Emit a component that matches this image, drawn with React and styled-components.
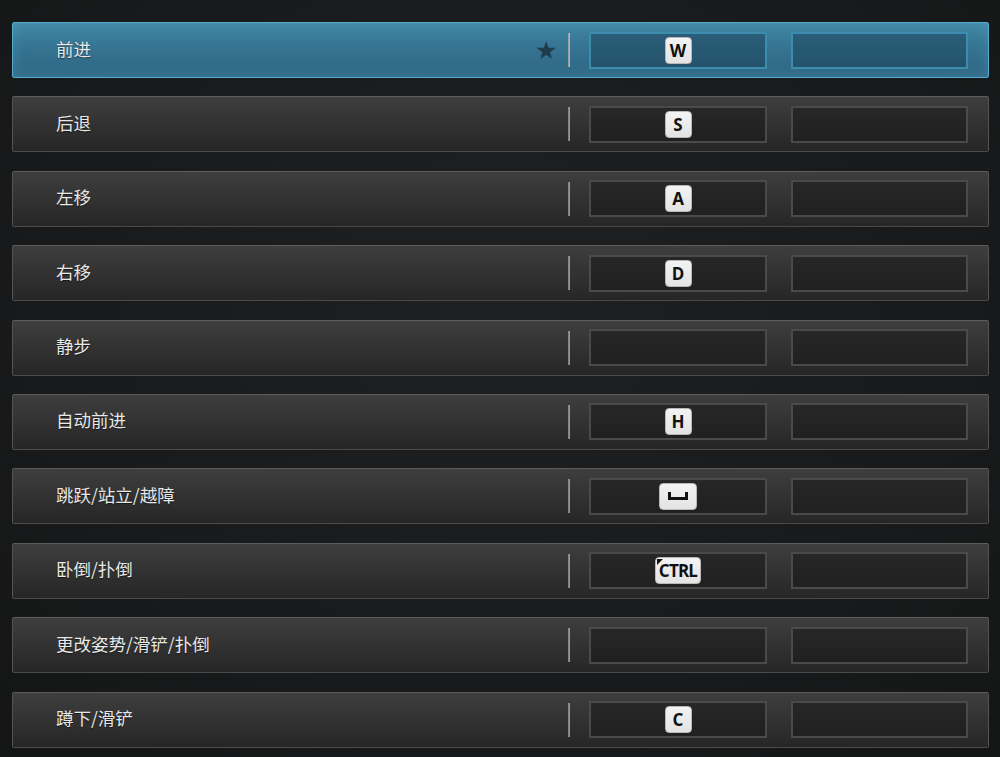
import React from "react";
import styled, { createGlobalStyle, css } from "styled-components";

const Global = createGlobalStyle`
  html, body { margin: 0; padding: 0; }
  body {
    background: #1a1b1c;
    font-family: "Noto Sans CJK SC", "Noto Sans", sans-serif;
  }
`;

const Page = styled.div`
  width: 1000px;
  height: 757px;
  box-sizing: border-box;
  padding: 22px 11px 0 12px;
  overflow: hidden;
  background:
    radial-gradient(ellipse at 50% 40%, #1f2021 0%, #18191a 70%, #141515 100%);
  display: flex;
  flex-direction: column;
  gap: 18.4px;
`;

const Row = styled.div`
  height: 56px;
  flex-shrink: 0;
  box-sizing: border-box;
  display: grid;
  grid-template-columns: 1fr 34px 2px 221px 177px;
  align-items: center;
  padding: 0 20px 0 43px;
  border-radius: 2px;
  ${(p) =>
    p.$active
      ? css`
          border: 1px solid #56aacb;
          background: linear-gradient(180deg, #3f86a3 0%, #357492 45%, #2e6683 100%);
          box-shadow: inset 0 0 14px rgba(110, 190, 220, 0.25);
        `
      : css`
          border: 1px solid #545454;
          border-top-color: #5c5c5c;
          border-bottom-color: #4a4a4a;
          background: linear-gradient(180deg, #3e3e3e 0%, #323232 50%, #262626 100%);
        `}
`;

const Label = styled.span`
  font-family: "Noto Sans CJK SC", "Noto Sans", sans-serif;
  font-size: 17.5px;
  color: #e8e8e8;
  text-shadow: 0 1px 1px rgba(0, 0, 0, 0.5);
  margin-top: -4px;
`;

const Star = styled.span`
  font-size: 25px;
  color: #1e3b4b;
  justify-self: start;
  line-height: 1;
  margin-left: 1px;
  font-family: "DejaVu Sans", sans-serif;
`;

const Divider = styled.div`
  width: 2px;
  height: 34px;
  background: linear-gradient(90deg, #9a9a9a, #d0d0d0);
  opacity: ${(p) => (p.$active ? 0.85 : 0.7)};
`;

const Slot = styled.div`
  height: 37px;
  box-sizing: border-box;
  display: flex;
  align-items: center;
  justify-content: center;
  ${(p) => (p.$first ? "margin: 0 24px 0 19px;" : "")}
  ${(p) =>
    p.$active
      ? css`
          border: 2px solid #3b8cad;
          background: linear-gradient(180deg, #2a5d78 0%, #24536c 100%);
        `
      : css`
          border: 2px solid #4a4a4a;
          background: linear-gradient(180deg, #272727 0%, #202020 100%);
        `}
`;

const Key = styled.div`
  position: relative;
  height: 27px;
  min-width: 27px;
  padding: 0 ${(p) => (p.$wide ? "3px" : "0")};
  box-sizing: border-box;
  border-radius: 4px;
  background: linear-gradient(180deg, #f3f3f3, #e3e3e3);
  border: 1px solid #b8b8b8;
  display: flex;
  align-items: center;
  justify-content: center;
  font-family: "Open Sans", "DejaVu Sans", sans-serif;
  font-weight: 700;
  font-size: 17px;
  color: #111;
  letter-spacing: ${(p) => (p.$wide ? "-0.8px" : "0")};
  ${(p) =>
    p.$corner &&
    css`
      &::before {
        content: "";
        position: absolute;
        left: 1px;
        top: 1px;
        border-top: 6px solid #111;
        border-right: 6px solid transparent;
      }
    `}
`;

const SpaceKey = styled(Key)`
  width: 38px;
`;

const rows = [
  { label: "前进", key: "W", active: true },
  { label: "后退", key: "S" },
  { label: "左移", key: "A" },
  { label: "右移", key: "D" },
  { label: "静步" },
  { label: "自动前进", key: "H" },
  { label: "跳跃/站立/越障", key: "SPACE" },
  { label: "卧倒/扑倒", key: "CTRL" },
  { label: "更改姿势/滑铲/扑倒" },
  { label: "蹲下/滑铲", key: "C" },
];

function KeyCap({ k }) {
  if (!k) return null;
  if (k === "SPACE")
    return (
      <SpaceKey>
        <svg width="20" height="8" viewBox="0 0 20 8">
          <path d="M1.5 0 V6.5 H18.5 V0" fill="none" stroke="#111" strokeWidth="3" />
        </svg>
      </SpaceKey>
    );
  if (k === "CTRL")
    return (
      <Key $wide $corner>
        {k}
      </Key>
    );
  return <Key>{k}</Key>;
}

export default function App() {
  return (
    <>
      <Global />
      <Page>
        {rows.map((r) => (
          <Row key={r.label} $active={r.active}>
            <Label>{r.label}</Label>
            <Star>{r.active ? "★" : ""}</Star>
            <Divider $active={r.active} />
            <Slot $first $active={r.active}>
              <KeyCap k={r.key} />
            </Slot>
            <Slot $active={r.active} />
          </Row>
        ))}
      </Page>
    </>
  );
}
